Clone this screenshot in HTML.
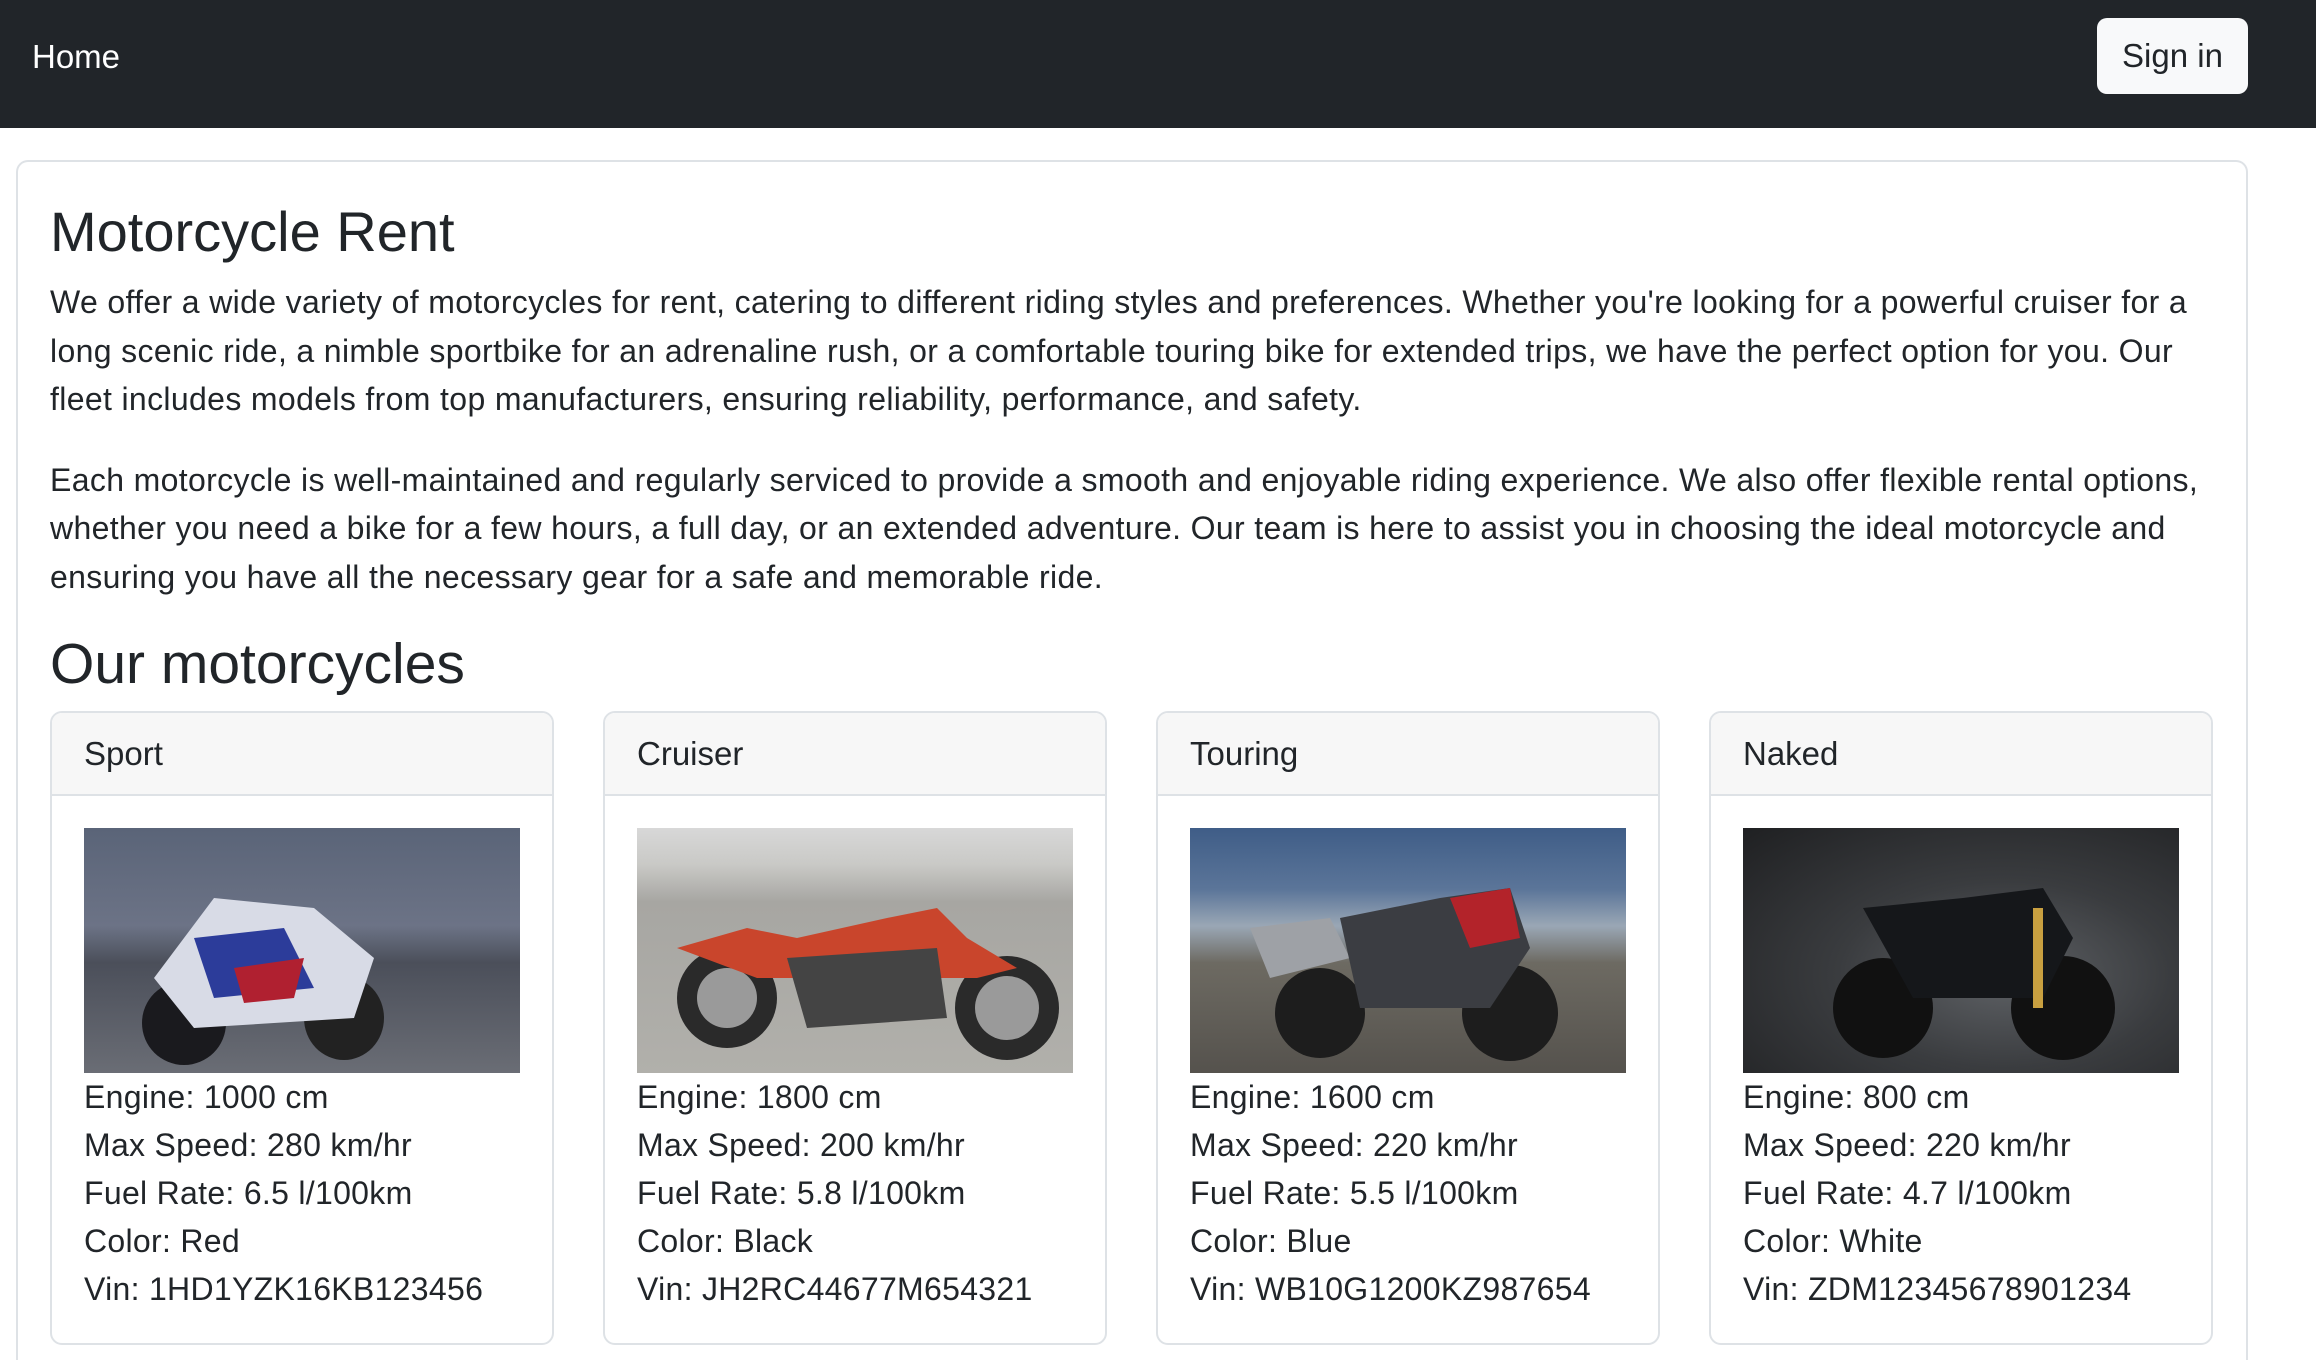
<!DOCTYPE html>
<html><head><style>
*{box-sizing:border-box;margin:0;padding:0}
html,body{width:2316px;height:1360px;overflow:hidden}
body{background:#fff;font-family:"Liberation Sans",Helvetica,Arial,sans-serif;color:#212529;font-size:32px;line-height:48px;position:relative}
.nav{height:128px;background:#212529;position:relative}
.home{position:absolute;left:32px;top:33px;color:#fff;font-size:33px;line-height:48px}
.btn{position:absolute;left:2097px;top:18px;width:151px;height:76px;background:#f8f9fa;border-radius:10px;font-size:33px;line-height:76px;text-align:center;color:#212529}
.main{position:absolute;left:16px;top:160px;width:2232px;height:1200px;border:2px solid #dee2e6;border-bottom:none;border-radius:12px 12px 0 0;padding:36px 32px;overflow:hidden}
h1{font-size:56px;line-height:68px;font-weight:500;margin-bottom:12px;margin-top:0}
p{margin-bottom:32px;font-size:32px;line-height:48.5px;letter-spacing:0.35px}
h2{font-size:57px;line-height:70px;font-weight:500;margin-top:-4px;margin-bottom:12px}
.cards{display:flex;gap:49px}
.card{width:504px;height:634px;border:2px solid #dee2e6;border-radius:12px;overflow:hidden}
.ch{height:83px;background:#f7f7f7;border-bottom:2px solid #dee2e6;padding:0 32px;line-height:82px;font-size:33px}
.cb{padding:32px 32px 0}
.img{width:436px;height:245px;position:relative;overflow:hidden}
.cb div.t{line-height:48px;font-size:32px;letter-spacing:0.3px}
</style></head><body>
<div class="nav"><div class="home">Home</div><div class="btn">Sign in</div></div>
<div class="main">
<h1>Motorcycle Rent</h1>
<p>We offer a wide variety of motorcycles for rent, catering to different riding styles and preferences. Whether you're looking for a powerful cruiser for a long scenic ride, a nimble sportbike for an adrenaline rush, or a comfortable touring bike for extended trips, we have the perfect option for you. Our fleet includes models from top manufacturers, ensuring reliability, performance, and safety.</p>
<p>Each motorcycle is well-maintained and regularly serviced to provide a smooth and enjoyable riding experience. We also offer flexible rental options, whether you need a bike for a few hours, a full day, or an extended adventure. Our team is here to assist you in choosing the ideal motorcycle and ensuring you have all the necessary gear for a safe and memorable ride.</p>
<h2>Our motorcycles</h2>
<div class="cards">
<div class="card"><div class="ch">Sport</div><div class="cb">
<div class="img" style="background:linear-gradient(#5a6478 0%,#6c7386 40%,#4b4f5a 55%,#6a6d75 100%)">
<svg width="436" height="245"><ellipse cx="100" cy="195" rx="42" ry="42" fill="#1a1a1e"/><ellipse cx="260" cy="190" rx="40" ry="42" fill="#222"/><path d="M70 150 L130 70 L230 80 L290 130 L270 190 L110 200Z" fill="#d8dbe6"/><path d="M110 110 L200 100 L230 160 L130 170Z" fill="#2c3c9a"/><path d="M150 140 L220 130 L210 170 L160 175Z" fill="#b02030"/></svg></div>
<div class="t">Engine: 1000 cm</div><div class="t">Max Speed: 280 km/hr</div><div class="t">Fuel Rate: 6.5 l/100km</div><div class="t">Color: Red</div><div class="t">Vin: 1HD1YZK16KB123456</div></div></div>
<div class="card"><div class="ch">Cruiser</div><div class="cb">
<div class="img" style="background:linear-gradient(#d8d8d8 0%,#c9c9c6 15%,#a7a6a2 30%,#b1b0ab 100%)">
<svg width="436" height="245"><circle cx="90" cy="170" r="50" fill="#2a2a2a"/><circle cx="370" cy="180" r="52" fill="#2a2a2a"/><circle cx="90" cy="170" r="30" fill="#9a9a9a"/><circle cx="370" cy="180" r="32" fill="#9a9a9a"/><path d="M40 120 L110 100 L160 110 L250 90 L300 80 L330 110 L380 140 L340 150 L120 150Z" fill="#c9452c"/><path d="M150 130 L300 120 L310 190 L170 200Z" fill="#444"/></svg></div>
<div class="t">Engine: 1800 cm</div><div class="t">Max Speed: 200 km/hr</div><div class="t">Fuel Rate: 5.8 l/100km</div><div class="t">Color: Black</div><div class="t">Vin: JH2RC44677M654321</div></div></div>
<div class="card"><div class="ch">Touring</div><div class="cb">
<div class="img" style="background:linear-gradient(#3f5d87 0%,#5b7599 25%,#9aa7b5 40%,#6d6a62 55%,#55524d 100%)">
<svg width="436" height="245"><circle cx="130" cy="185" r="45" fill="#1d1d1d"/><circle cx="320" cy="185" r="48" fill="#1d1d1d"/><path d="M60 100 L140 90 L160 130 L80 150Z" fill="#9ea1a6"/><path d="M150 90 L250 70 L320 60 L340 120 L300 180 L170 180Z" fill="#3b3d42"/><path d="M260 70 L320 60 L330 110 L280 120Z" fill="#b3232a"/></svg></div>
<div class="t">Engine: 1600 cm</div><div class="t">Max Speed: 220 km/hr</div><div class="t">Fuel Rate: 5.5 l/100km</div><div class="t">Color: Blue</div><div class="t">Vin: WB10G1200KZ987654</div></div></div>
<div class="card"><div class="ch">Naked</div><div class="cb">
<div class="img" style="background:radial-gradient(ellipse at 60% 60%,#5f6266 0%,#3a3c3f 45%,#1f2022 100%)">
<svg width="436" height="245"><circle cx="140" cy="180" r="50" fill="#111"/><circle cx="320" cy="180" r="52" fill="#111"/><path d="M120 80 L220 70 L300 60 L330 110 L300 170 L170 170Z" fill="#15171a"/><rect x="290" y="80" width="10" height="100" fill="#c9a040"/></svg></div>
<div class="t">Engine: 800 cm</div><div class="t">Max Speed: 220 km/hr</div><div class="t">Fuel Rate: 4.7 l/100km</div><div class="t">Color: White</div><div class="t">Vin: ZDM12345678901234</div></div></div>
</div>
</div>
</body></html>
